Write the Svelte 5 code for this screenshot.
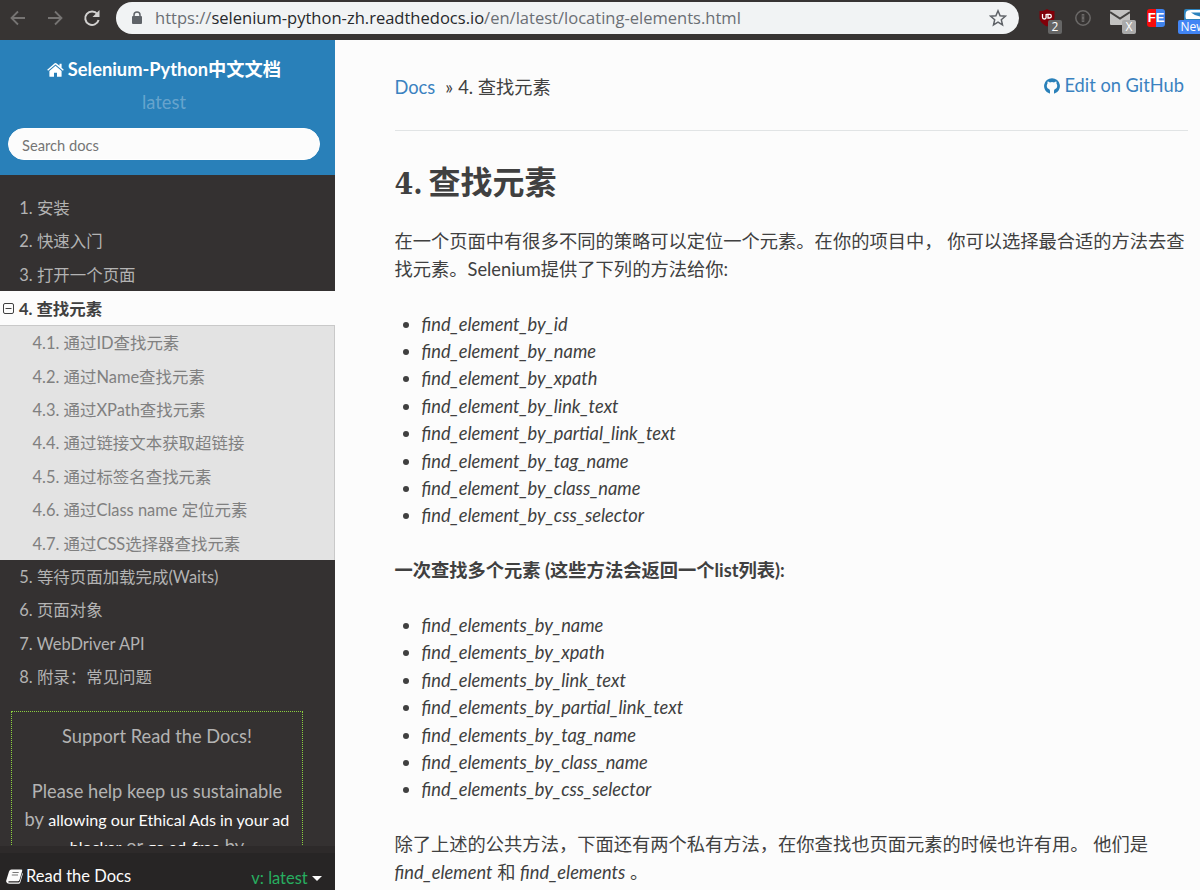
<script>
  const before = ['1. 安装', '2. 快速入门', '3. 打开一个页面'];
  const sections = [
    '4.1. 通过ID查找元素',
    '4.2. 通过Name查找元素',
    '4.3. 通过XPath查找元素',
    '4.4. 通过链接文本获取超链接',
    '4.5. 通过标签名查找元素',
    '4.6. 通过Class name 定位元素',
    '4.7. 通过CSS选择器查找元素'
  ];
  const after = ['5. 等待页面加载完成(Waits)', '6. 页面对象', '7. WebDriver API', '8. 附录：常见问题'];

  const single = ['id', 'name', 'xpath', 'link_text', 'partial_link_text', 'tag_name', 'class_name', 'css_selector'];
  const multiple = ['name', 'xpath', 'link_text', 'partial_link_text', 'tag_name', 'class_name', 'css_selector'];

  let query = $state('');
</script>

<div class="browser">
  <header class="toolbar">
    <svg width="16" height="16" viewBox="0 0 16 16" fill="none" stroke="#767473" stroke-width="1.8" aria-hidden="true">
      <path d="M15 8H2M8 1.5 1.5 8 8 14.5" />
    </svg>
    <svg class="forward" width="16" height="16" viewBox="0 0 16 16" fill="none" stroke="#767473" stroke-width="1.8" aria-hidden="true">
      <path d="M1 8h13M8 1.5 14.5 8 8 14.5" />
    </svg>
    <svg class="reload" width="18" height="18" viewBox="0 0 18 18" aria-hidden="true">
      <path d="M14.4 5A6.8 6.8 0 1 0 15.6 11" fill="none" stroke="#d2d1d0" stroke-width="2" />
      <path d="M16.5 1v7h-7z" fill="#d2d1d0" />
    </svg>

    <div class="omnibox">
      <svg width="12" height="14" viewBox="0 0 12 14" aria-hidden="true">
        <path d="M3 6V4a3 3 0 0 1 6 0v2" fill="none" stroke="#5f6368" stroke-width="1.5" />
        <rect x="1" y="5" width="10" height="8" rx="1" fill="#5f6368" />
      </svg>
      <span class="url"><span class="dim">https://</span>selenium-python-zh.readthedocs.io<span class="dim">/en/latest/locating-elements.html</span></span>
      <svg class="star" width="18" height="18" viewBox="0 0 18 18" fill="none" stroke="#5f6368" stroke-width="1.5" aria-hidden="true">
        <path d="m9 1.8 2.1 4.9 5.2.5-4 3.5 1.2 5.2L9 13.1l-4.5 2.8 1.2-5.2-4-3.5 5.2-.5z" />
      </svg>
    </div>

    <div class="extensions">
      <div class="ext">
        <svg width="16" height="18" viewBox="0 0 16 18" aria-hidden="true">
          <path d="M8 0c2.3 1.7 4.8 2 7.5 2v6.5c0 4-3.5 7-7.5 9-4-2-7.5-5-7.5-9V2C3.2 2 5.700 1.700 8 0z" fill="#800009" />
          <path d="M3.5 5v3.200a1.800 1.800 0 0 0 3.600 0V5M9 5.500V9h1.500a1.800 1.800 0 0 0 0-3.600H7.500" fill="none" stroke="#fff" stroke-width="1.3" />
        </svg>
        <span class="badge gray">2</span>
      </div>
      <svg class="ext info" width="16" height="16" viewBox="0 0 16 16" fill="none" stroke="#6b6968" aria-hidden="true">
        <circle cx="8" cy="8" r="7.2" stroke-width="1.5" />
        <path d="M8 4v8" stroke-width="2.6" />
        <path d="M8 5v2M8 9v2" stroke="#454342" stroke-width=".8" />
      </svg>
      <div class="ext mail">
        <svg width="20" height="16" viewBox="0 0 20 16" aria-hidden="true">
          <rect width="20" height="15" rx="1" fill="#c3c2c1" />
          <path d="m0 2 10 6.5L20 2" fill="none" stroke="#454342" stroke-width="2" />
        </svg>
        <span class="badge light">X</span>
      </div>
      <div class="ext fe">FE</div>
      <div class="ext news">
        <svg width="20" height="11" viewBox="0 0 20 11" aria-hidden="true">
          <rect width="22" height="14" rx="2" fill="#2d83be" />
          <path d="M2 3q1-2 5-2h13v9H2q-1-3 0-7z" fill="#fff" />
          <path d="M7 3.5h13v4Q12 8 7 3.5z" fill="#2d83be" />
        </svg>
        <span class="badge blue">New</span>
      </div>
    </div>
  </header>

  <div class="page">
    <nav class="sidebar">
      <div class="side-head">
        <a class="project" href="#home">
          <svg width="17" height="14" viewBox="0 0 17 14" fill="#fff" aria-hidden="true">
            <path d="M8.5 2.8 2.4 7.9v5.3q0 .6.6.6h4V9.7h3v4.1h4q.6 0 .6-.6V7.9z" />
            <path d="M16.8 6.7 14.6 4.8V.8h-2.1v2L9.3.3q-.8-.6-1.6 0L.2 6.700l.9 1L8.500 1.6l7.4 6.1z" />
          </svg>
          <span>Selenium-Python中文文档</span>
        </a>
        <div class="version">latest</div>
        <input type="text" placeholder="Search docs" bind:value={query} />
      </div>

      <div class="side-scroll">
        <ul class="menu">
          {#each before as item}
            <li><a href="#toc">{item}</a></li>
          {/each}
          <li class="current">
            <a href="#toc">
              <svg width="11" height="11" viewBox="0 0 11 11" fill="none" stroke="#404040" aria-hidden="true">
                <rect x=".5" y=".5" width="10" height="10" rx="1.5" />
                <path d="M2.5 5.5h6" />
              </svg>
              <span>4. 查找元素</span>
            </a>
            <ul class="submenu">
              {#each sections as item}
                <li><a href="#toc">{item}</a></li>
              {/each}
            </ul>
          </li>
          {#each after as item}
            <li><a href="#toc">{item}</a></li>
          {/each}
        </ul>

        <div class="support">
          <p>Support Read the Docs!</p>
          <p>
            Please help keep us sustainable<br />by <a href="#ads">allowing our Ethical Ads in your ad</a><br /><a href="#ads">blocker</a> or <a href="#ads">go ad-free</a> by
          </p>
        </div>
      </div>

      <div class="rtd-bar">
        <span class="rtd">
          <svg width="17" height="15" viewBox="0 0 17 15" aria-hidden="true">
            <path d="M5.5.5h9.7q1.4 0 1 1.4l-2.7 9q-.4 1.3-1.7 1.3H3.1q-1 0-.8.7.2.6 1 .6h9.2q1 0 1.4-1.2L16.3 4q.7.4.5 1.1l-2.4 8.1q-.5 1.5-1.9 1.5H3.2Q1 14.7.3 12.9q-.3-.8 0-1.7L3 2.4Q3.7.5 5.5.5z" fill="#fcfcfc" />
            <path d="M6.5 3.5h6.2M5.8 6H12" stroke="#777" />
          </svg>
          Read the Docs
        </span>
        <span class="current-version">v: latest <i class="caret"></i></span>
      </div>
    </nav>

    <main class="content">
      <div class="breadcrumbs">
        <div><a href="#docs">Docs</a><span class="sep">»</span>4. 查找元素</div>
        <a class="github" href="#edit">
          <svg width="16" height="16" viewBox="0 0 16 16" aria-hidden="true">
            <path fill="#2980b9" d="M8 .2a7.9 7.9 0 0 0-2.5 15.4c.4.1.5-.2.5-.4v-2.7c-.5-.5-.7-1-.7-1.5-1.700-.3-2.500-1.400-2.500-3.300 0-.8.3-1.6.8-2.2-.2-.6-.2-1.3.1-2 .9 0 1.6.4 2.2.9a7.6 7.6 0 0 1 4.2 0c.6-.5 1.3-.9 2.2-.9.3.7.3 1.4.1 2 .5.6.8 1.4.8 2.2 0 1.9-.8 3-2.500 3.300 0 .5-.2 1-.7 1.5v2.7c0 .2.1.5.5.4A7.9 7.9 0 0 0 8 .2z" />
          </svg>
          Edit on GitHub
        </a>
      </div>
      <hr />

      <article>
        <h1><span class="num">4.</span>查找元素</h1>
        <p>
          在一个页面中有很多不同的策略可以定位一个元素。在你的项目中， 你可以选择最合适的方法去查<br />找元素。Selenium提供了下列的方法给你:
        </p>
        <ul>
          {#each single as name}
            <li><em>find_element_by_{name}</em></li>
          {/each}
        </ul>
        <p class="lead">一次查找多个元素 (这些方法会返回一个list列表):</p>
        <ul>
          {#each multiple as name}
            <li><em>find_elements_by_{name}</em></li>
          {/each}
        </ul>
        <p>
          除了上述的公共方法，下面还有两个私有方法，在你查找也页面元素的时候也许有用。 他们是<br /><em>find_element</em> 和 <em>find_elements</em> 。
        </p>
      </article>
    </main>
  </div>
</div>

<style>
  :global(body) {
    overflow: hidden;
  }

  .browser {
    height: 890px;
    display: flex;
    flex-direction: column;
    overflow: hidden;
    font-family: Lato, "Noto Sans CJK SC", sans-serif;
    font-size: 18.27px;
    line-height: 27.4px;
    color: #404040;
    background: #fcfcfc;
  }

  a { color: #3a82c0; text-decoration: none; }
  ul { list-style: none; margin: 0; padding: 0; }
  p { margin: 0; }
  svg { display: block; flex: none; }

  /* Browser toolbar */
  .toolbar {
    height: 40px;
    flex: none;
    box-sizing: border-box;
    display: flex;
    align-items: center;
    padding: 0 0 4px 10px;
    background: #373433;
  }

  .forward { margin-left: 21px; }
  .reload { margin-left: 20px; }

  .omnibox {
    width: 903px;
    height: 32px;
    flex: none;
    box-sizing: border-box;
    display: flex;
    align-items: center;
    margin-left: 15px;
    padding: 0 12px 0 15px;
    border-radius: 16px;
    background: #f1f3f4;
  }

  .url {
    margin-left: 12px;
    font-family: "Open Sans", sans-serif;
    font-size: 16.55px;
    white-space: nowrap;
    color: #27292c;
  }

  .dim { color: #6b6f74; }
  .star { margin-left: auto; }

  .extensions {
    display: flex;
    align-items: center;
    margin-left: 20px;
  }

  .ext { position: relative; flex: none; }
  .info { margin-left: 20px; }
  .mail { margin-left: 19px; }

  .fe {
    width: 18px;
    height: 18px;
    margin-left: 17px;
    border-radius: 3px;
    background: linear-gradient(90deg, #f60c0c 50%, #3f83ed 50%);
    color: #fff;
    font: bold 13px/18px "Liberation Sans", sans-serif;
    text-align: center;
  }

  .news { margin: -8px 0 0 19px; }

  .badge {
    position: absolute;
    left: 9px;
    top: 11px;
    width: 14px;
    height: 14px;
    border-radius: 2px;
    color: #fff;
    font: 12px/14px "Open Sans", sans-serif;
    text-align: center;
  }

  .gray { background: #666; }
  .light { left: 12px; top: 10px; background: #aaa; }
  .blue { left: -6px; width: 30px; background: #4285f4; }

  /* Sidebar */
  .page {
    flex: 1;
    min-height: 0;
    display: flex;
  }

  .sidebar {
    width: 335px;
    flex: none;
    display: flex;
    flex-direction: column;
    background: #343131;
  }

  .side-head {
    height: 135px;
    flex: none;
    box-sizing: border-box;
    display: flex;
    flex-direction: column;
    align-items: center;
    padding: 16px 8px 0;
    background: #2980b9;
  }

  .project {
    display: flex;
    align-items: center;
    gap: 4px;
    margin-right: 7px;
    color: #fff;
    font-weight: 700;
    white-space: nowrap;
  }

  .version {
    margin: 6px 7px 0 0;
    color: rgba(255, 255, 255, 0.3);
  }

  input {
    width: 312px;
    height: 32px;
    box-sizing: border-box;
    margin: 11px 7px 0 0;
    padding: 2px 13px 0;
    border: 1px solid #fff;
    border-radius: 16px;
    background: #fcfcfc;
    font: 14.7px Lato, sans-serif;
    color: #404040;
    outline: none;
  }

  input::placeholder { color: #757575; }

  .side-scroll {
    flex: 1;
    min-height: 0;
    overflow: hidden;
    padding-top: 16px;
  }

  .menu { font-size: 16.45px; }

  .menu a {
    display: block;
    height: 33.4px;
    line-height: 34px;
    padding-left: 19.3px;
    color: #b3b3b3;
    white-space: nowrap;
  }

  .menu .current > a {
    height: 34px;
    display: flex;
    align-items: center;
    gap: 5px;
    padding-left: 3px;
    background: #fcfcfc;
    color: #404040;
    font-weight: 700;
  }

  .menu .current > a span { padding-top: 1px; }

  .submenu {
    border: 1px solid #c9c9c9;
    border-width: 1px 1px 0 0;
    background: #e3e3e3;
  }

  .menu .submenu a { padding-left: 32.5px; color: #808080; }

  .support {
    width: 292px;
    box-sizing: border-box;
    margin: 18px 0 0 11px;
    padding: 11px 0 10px;
    border: 1px dotted #8cd040;
    color: #b3b3b3;
    text-align: center;
    white-space: nowrap;
  }

  .support p + p { margin-top: 27.4px; }
  .support a { color: #fcfcfc; font-size: 16.1px; }

  .rtd-bar {
    height: 44px;
    flex: none;
    box-sizing: border-box;
    display: flex;
    justify-content: space-between;
    padding: 10px 13px 0 6px;
    border-top: 7px solid #2d2a2a;
    background: #272525;
    font-size: 16.5px;
    line-height: 27px;
    color: #fcfcfc;
  }

  .rtd {
    display: flex;
    align-items: center;
    gap: 3px;
    height: 27px;
  }

  .current-version {
    padding-top: 2px;
    color: #27ae60;
  }

  .caret {
    display: inline-block;
    vertical-align: 3px;
    border: 5.5px solid transparent;
    border-top-color: #fcfcfc;
    border-bottom: 0;
  }

  /* Content */
  .content {
    flex: 1;
    min-width: 0;
    padding: 32px 12px 0 59.5px;
  }

  .breadcrumbs {
    display: flex;
    justify-content: space-between;
    height: 58px;
    padding: 2px 4px 0 0;
    box-sizing: border-box;
    white-space: nowrap;
  }

  .sep { margin: 0 5px 0 10px; }

  .github {
    display: flex;
    align-items: center;
    gap: 4px;
    height: 24px;
  }

  hr {
    margin: 0;
    border: 0;
    border-top: 1px solid #e1e4e5;
  }

  article { white-space: nowrap; }

  h1 {
    height: 40px;
    margin: 31px 0 26.4px;
    font-size: 32px;
    line-height: 40px;
  }

  .num {
    display: inline-block;
    width: 34px;
    font-family: "DejaVu Serif Condensed", "DejaVu Serif", serif;
    font-stretch: condensed;
    font-size: 30px;
  }

  article ul { margin: 27.4px 0; }

  article li {
    list-style: disc;
    margin-left: 27px;
  }

  .lead { font-weight: 700; }
</style>
